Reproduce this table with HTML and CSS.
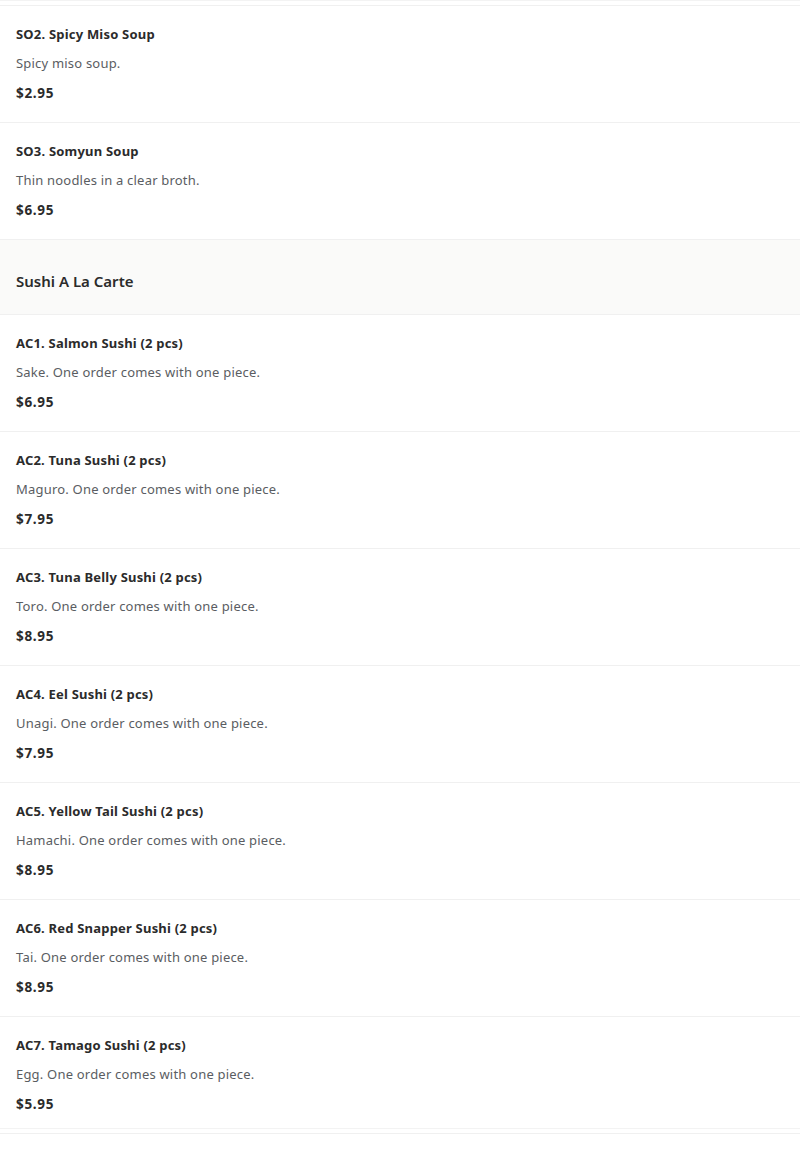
FILE: index.html
```html
<!DOCTYPE html>
<html>
<head>
<meta charset="utf-8">
<link rel="stylesheet" href="styles.css">
</head>
<body>
<div class="menu">
  <div class="item double">
    <div class="title">SO2. Spicy Miso Soup</div>
    <div class="desc">Spicy miso soup.</div>
    <div class="price">$2.95</div>
  </div>
  <div class="item">
    <div class="title">SO3. Somyun Soup</div>
    <div class="desc">Thin noodles in a clear broth.</div>
    <div class="price">$6.95</div>
  </div>
  <div class="section"><h2>Sushi A La Carte</h2></div>
  <div class="item">
    <div class="title">AC1. Salmon Sushi (2 pcs)</div>
    <div class="desc">Sake. One order comes with one piece.</div>
    <div class="price">$6.95</div>
  </div>
  <div class="item">
    <div class="title">AC2. Tuna Sushi (2 pcs)</div>
    <div class="desc">Maguro. One order comes with one piece.</div>
    <div class="price">$7.95</div>
  </div>
  <div class="item">
    <div class="title">AC3. Tuna Belly Sushi (2 pcs)</div>
    <div class="desc">Toro. One order comes with one piece.</div>
    <div class="price">$8.95</div>
  </div>
  <div class="item">
    <div class="title">AC4. Eel Sushi (2 pcs)</div>
    <div class="desc">Unagi. One order comes with one piece.</div>
    <div class="price">$7.95</div>
  </div>
  <div class="item">
    <div class="title">AC5. Yellow Tail Sushi (2 pcs)</div>
    <div class="desc">Hamachi. One order comes with one piece.</div>
    <div class="price">$8.95</div>
  </div>
  <div class="item">
    <div class="title">AC6. Red Snapper Sushi (2 pcs)</div>
    <div class="desc">Tai. One order comes with one piece.</div>
    <div class="price">$8.95</div>
  </div>
  <div class="item">
    <div class="title">AC7. Tamago Sushi (2 pcs)</div>
    <div class="desc">Egg. One order comes with one piece.</div>
    <div class="price">$5.95</div>
  </div>
  <div class="item double">
    <div class="title">AC8. Mackerel Sushi (2 pcs)</div>
    <div class="desc">Saba. One order comes with one piece.</div>
    <div class="price">$6.95</div>
  </div>
</div>
</body>
</html>
```
FILE: styles.css
```css
html, body {
  margin: 0;
  padding: 0;
  background: #ffffff;
}
body {
  font-family: "Noto Sans", "DejaVu Sans", sans-serif;
  color: #2b2b2b;
  overflow: hidden;
}
.menu {
  padding-top: 5px;
}
.item {
  border-top: 1px solid #f0f0f0;
  padding: 19px 16px 20px;
  display: flex;
  flex-direction: column;
  gap: 11px;
}
.item.double {
  box-shadow: 0 -4px 0 0 #ffffff, 0 -5px 0 0 #f3f3f3;
}
.title {
  font-size: 13px;
  line-height: 18px;
  font-weight: 700;
  letter-spacing: 0.2px;
  color: #2b2b2b;
}
.desc {
  font-size: 13px;
  line-height: 18px;
  letter-spacing: 0.2px;
  color: #5a5d62;
}
.price {
  font-size: 13.5px;
  line-height: 18px;
  font-weight: 700;
  letter-spacing: 0.7px;
  color: #2b2b2b;
  margin-top: 1px;
}
.section {
  border-top: 1px solid #f0f0f0;
  background: #fafaf9;
  height: 75px;
  display: flex;
  align-items: center;
  padding: 0 16px;
  box-sizing: border-box;
}
.section h2 {
  margin: 0;
  font-size: 15px;
  font-weight: 600;
  color: #2b2b2b;
  padding-top: 8px;
}
```
